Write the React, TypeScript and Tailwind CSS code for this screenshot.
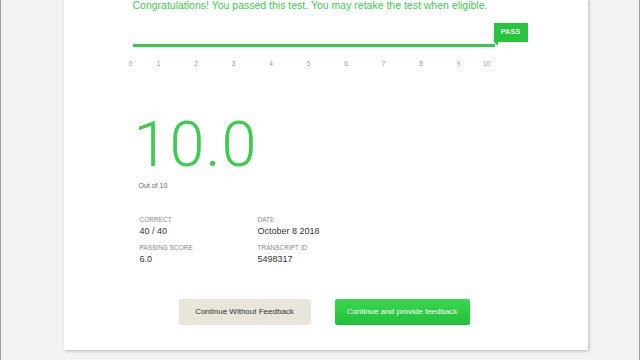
import React from 'react';

const ticks = ['1', '2', '3', '4', '5', '6', '7', '8', '9'];

function Tick({ label }: { label: string }) {
  return (
    <div className="flex w-0 justify-center">
      <span className="whitespace-nowrap">{label}</span>
    </div>
  );
}

function Stat({ label, value }: { label: string; value: string }) {
  return (
    <div className="flex flex-col">
      <span className="text-[6.5px] leading-[9px] uppercase text-[#8a8a8a]">{label}</span>
      <span className="mt-[1px] text-[9px] leading-[12px] text-[#333]">{value}</span>
    </div>
  );
}

export default function App() {
  return (
    <div
      className="h-[360px] w-[640px] overflow-hidden border-x-[1.5px] border-[#9c9c9c] bg-[#f3f3f3]"
      style={{ fontFamily: '"Liberation Sans", Arial, sans-serif' }}
    >
      <div className="ml-[62.5px] h-[351px] w-[524px] bg-white shadow-[1px_1px_3px_rgba(0,0,0,0.25)]">
        <div className="pl-[69px]">
          <p className="mt-[-1.5px] text-[10.5px] leading-[12px] text-[#3ccd4c]">
            Congratulations! You passed this test. You may retake the test when eligible.
          </p>

          <div className="relative mt-[33px] h-[3px] w-[362px] bg-[#34cc48]">
            <div className="absolute bottom-[5px] left-[361px] flex h-[19px] w-[34px] items-center justify-center bg-[#25c63c] text-[7px] font-bold tracking-[0.3px] text-white">
              PASS
              <div className="absolute left-0 top-full h-0 w-0 border-l-[4px] border-r-[0px] border-t-[4px] border-l-transparent border-t-[#25c63c]" />
            </div>
          </div>

          <div className="ml-[-2px] mt-[13px] flex text-[6.5px] leading-[8px] text-[#9a9a9a]">
            <Tick label="0" />
            <div className="w-[28px]" />
            <div className="flex gap-[37.5px]">
              {ticks.map((t) => (
                <Tick key={t} label={t} />
              ))}
            </div>
            <div className="w-[28px]" />
            <Tick label="10" />
          </div>

          <div
            className="ml-[1px] mt-[45.5px] text-[63px] font-light leading-none tracking-[1px] text-[#3ccd4c]"
            style={{ fontFamily: 'Roboto, "Liberation Sans", sans-serif' }}
          >
            10.0
          </div>
          <div className="ml-[6px] mt-[5px] text-[7px] leading-[9px] text-[#666]">Out of 10</div>

          <div className="ml-[7px] mt-[25px] grid w-[240px] grid-cols-[118px_1fr] gap-y-[6px]">
            <Stat label="Correct" value="40 / 40" />
            <Stat label="Date" value="October 8 2018" />
            <Stat label="Passing Score" value="6.0" />
            <Stat label="Transcript ID" value="5498317" />
          </div>
        </div>

        <div className="ml-[115px] mt-[33.5px] flex gap-[24px]">
          <button className="flex h-[26px] w-[132px] items-center justify-center rounded-[2px] bg-[#e9e5da] text-[8px] text-[#333]">
            Continue Without Feedback
          </button>
          <button className="flex h-[26px] w-[135px] items-center justify-center rounded-[2px] bg-gradient-to-b from-[#3bd650] to-[#1fc13a] text-[8px] text-white">
            Continue and provide feedback
          </button>
        </div>
      </div>
    </div>
  );
}
